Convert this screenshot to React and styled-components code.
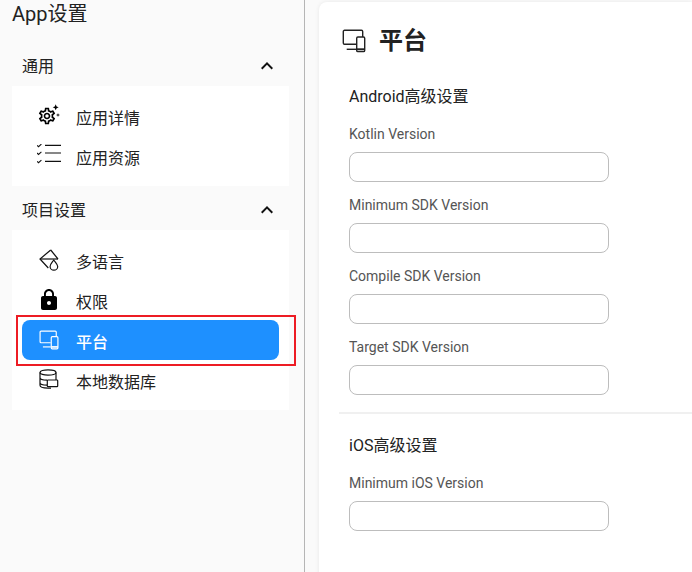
import React from 'react';
import styled, { createGlobalStyle } from 'styled-components';
import { MdLock, MdOutlineSettings, MdExpandLess } from 'react-icons/md';

const Global = createGlobalStyle`
  html, body { margin: 0; padding: 0; height: 100%; overflow: hidden; }
  body { font-family: Roboto, "Noto Sans CJK SC", sans-serif; background: #fafafa; color: #1f1f1f; }
  * { box-sizing: border-box; }
`;

const Page = styled.div`
  position: relative;
  display: flex;
  width: 692px;
  height: 572px;
  overflow: hidden;
  background: #fafafa;
`;
const Sidebar = styled.aside`
  width: 305px;
  flex: none;
  padding: 0 15px 0 12px;
  border-right: 1px solid #b5b5b5;
`;
const AppTitle = styled.h1`
  margin: 0 0 18px;
  height: 28px;
  font-size: 20px;
  line-height: 28px;
  font-weight: 400;
  color: #222;
`;
const SectionHead = styled.div`
  display: flex;
  align-items: center;
  justify-content: space-between;
  height: 40px;
  padding: 0 10px;
  color: #222;
  svg { display: block; }
`;
const SectionLabel = styled.span`
  font-size: 16px;
  line-height: 24px;
  margin-top: 2px;
`;
const Menu = styled.div`
  background: #fff;
  padding: 10px;
  margin-bottom: 4px;
`;
const Item = styled.div`
  display: flex;
  align-items: center;
  gap: 15px;
  height: 40px;
  padding-left: 15px;
  border-radius: 8px;
  font-size: 16px;
  color: ${p => (p.$active ? '#fff' : '#222')};
  background: ${p => (p.$active ? '#1e90ff' : 'transparent')};
  font-weight: ${p => (p.$active ? 500 : 400)};
  svg { display: block; }
`;
const ItemLabel = styled.span`
  line-height: 24px;
  margin-top: 6px;
`;
const IconSlot = styled.span`
  display: flex;
  align-items: center;
  justify-content: center;
  flex: none;
  width: 24px;
  height: 24px;
`;
const Highlight = styled.div`
  position: absolute;
  left: 16px;
  top: 315px;
  width: 280px;
  height: 51px;
  border: 2px solid #ed1c24;
  pointer-events: none;
`;
const Main = styled.main`
  flex: 1;
  padding: 2px 0 0 14px;
  min-width: 0;
`;
const Card = styled.section`
  height: 600px;
  background: #fff;
  border-top-left-radius: 8px;
  box-shadow: 0 0 4px rgba(0, 0, 0, 0.08);
  padding: 24px 0 0 20px;
`;
const Heading = styled.div`
  display: flex;
  align-items: center;
  gap: 13px;
  height: 30px;
  padding-left: 3px;
  margin-bottom: 29px;
  svg { display: block; }
`;
const HeadingText = styled.h2`
  margin: 0;
  font-size: 24px;
  line-height: 30px;
  font-weight: 700;
  color: #222;
`;
const Group = styled.div`
  padding: 0 0 17px 10px;
  & + & {
    border-top: 2px solid #f0f0f0;
    padding-top: 20px;
  }
`;
const GroupTitle = styled.h3`
  margin: 0 0 15px;
  height: 24px;
  font-size: 16px;
  line-height: 24px;
  font-weight: 400;
  color: #222;
`;
const Field = styled.label`
  display: block;
  & + & { margin-top: 13px; }
`;
const FieldLabel = styled.span`
  display: block;
  height: 20px;
  margin-bottom: 8px;
  font-size: 14px;
  line-height: 20px;
  color: #555;
`;
const Input = styled.input`
  display: block;
  width: 260px;
  height: 30px;
  border: 1px solid #bdbdbd;
  border-radius: 8px;
  background: #fff;
  outline: none;
`;

const Stroke = ({ children }) => (
  <svg width="24" height="24" viewBox="0 0 24 24" fill="none" stroke="#111" strokeWidth="1.2">
    {children}
  </svg>
);

const GearSpark = () => (
  <svg width="24" height="24" viewBox="0 0 24 24">
    <svg x="0" y="2" width="20" height="20" viewBox="0 0 24 24">
      <MdOutlineSettings size={24} color="#000" />
    </svg>
    <path d="M18.700 0.300l.9 2.100 2.100.9-2.100.9-.9 2.100-.9-2.100-2.100-.9 2.100-.9zM21 8.900l.5 1.600 1.600.5-1.600.5-.5 1.600-.5-1.600-1.600-.5 1.600-.5z" fill="#000" />
  </svg>
);
const Checks = () => (
  <Stroke>
    <path d="M0 1.300l1.500 1.400 2.900-2.600M0 9l1.500 1.400 2.900-2.600M0 17.300l1.500 1.400 2.900-2.600" strokeWidth="1.100" />
    <path d="M8 1.300h16M8 9h16M8 17.300h16" />
  </Stroke>
);
const Fill = () => (
  <Stroke>
    <path d="M13.700 2L3 11l8.300 9" />
    <path d="M13.700 2L21 11" />
    <path d="M3 11h18" />
    <path d="M16.800 12c-2 2.800-3.700 4.500-3.700 6.400a3.800 3.800 0 0 0 7.600 0c0-1.900-1.900-3.600-3.900-6.400z" fill="#fff" />
  </Stroke>
);
const Devices = ({ color, size }) => (
  <svg width={size} height={size} viewBox="0 0 24 24" fill="none" stroke={color} strokeWidth="1.400">
    <path d="M14 15.300H2.500A1.200 1.200 0 0 1 1.300 14.100V2.500A1.200 1.200 0 0 1 2.500 1.300H19.500A1.200 1.200 0 0 1 20.700 2.500V8" />
    <path d="M4.700 20.300H14" />
    <rect x="14.700" y="8" width="8" height="14.600" rx="1.200" />
    <path d="M14.700 20.300h8" strokeWidth="2" />
  </svg>
);
const Database = () => (
  <Stroke>
    <ellipse cx="11" cy="4.500" rx="8" ry="2.700" />
    <path d="M3 4.500V17.300c0 1.700 3.500 2.800 8 2.800h3M3 9.500c0 1.700 3.500 2.700 7 2.700M3 14.500c0 1.700 3 2.700 7 2.700M19 4.500V12" />
    <rect x="10.300" y="12" width="10.400" height="6.700" rx="0.800" fill="#fff" />
  </Stroke>
);

const Section = ({ title, children }) => (
  <>
    <SectionHead>
      <SectionLabel>{title}</SectionLabel>
      <MdExpandLess size={24} color="#111" />
    </SectionHead>
    <Menu>{children}</Menu>
  </>
);
const MenuItem = ({ icon, active, children }) => (
  <Item $active={active}>
    <IconSlot>{icon}</IconSlot>
    <ItemLabel>{children}</ItemLabel>
  </Item>
);
const F = ({ label }) => (
  <Field>
    <FieldLabel>{label}</FieldLabel>
    <Input />
  </Field>
);

export default function App() {
  return (
    <Page>
      <Global />
      <Sidebar>
        <AppTitle>App设置</AppTitle>
        <Section title="通用">
          <MenuItem icon={<GearSpark />}>应用详情</MenuItem>
          <MenuItem icon={<Checks />}>应用资源</MenuItem>
        </Section>
        <Section title="项目设置">
          <MenuItem icon={<Fill />}>多语言</MenuItem>
          <MenuItem icon={<MdLock size={24} color="#000" />}>权限</MenuItem>
          <MenuItem active icon={<Devices color="#fff" size={20} />}>平台</MenuItem>
          <MenuItem icon={<Database />}>本地数据库</MenuItem>
        </Section>
      </Sidebar>
      <Main>
        <Card>
          <Heading><Devices color="#222" size={24} /><HeadingText>平台</HeadingText></Heading>
          <Group>
            <GroupTitle>Android高级设置</GroupTitle>
            <F label="Kotlin Version" />
            <F label="Minimum SDK Version" />
            <F label="Compile SDK Version" />
            <F label="Target SDK Version" />
          </Group>
          <Group>
            <GroupTitle>iOS高级设置</GroupTitle>
            <F label="Minimum iOS Version" />
          </Group>
        </Card>
      </Main>
      <Highlight />
    </Page>
  );
}
